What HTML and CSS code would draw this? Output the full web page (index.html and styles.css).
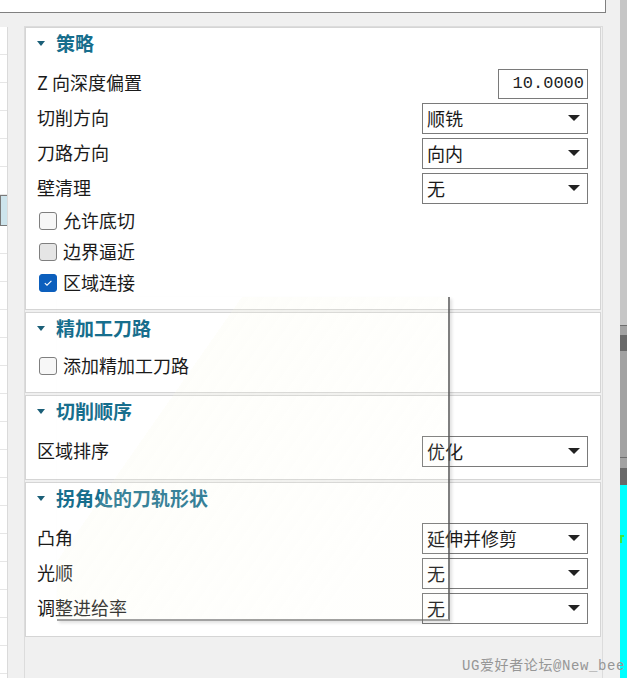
FILE: index.html
```html
<!DOCTYPE html>
<html lang="zh-CN">
<head>
  <meta charset="UTF-8">
  <title>策略</title>
  <link rel="stylesheet" href="styles.css">
</head>
<body>
<div class="screen">
  <div class="main">
    <div class="topbox"></div>
    <div class="work">
      <div class="list">
        <div class="li"></div><div class="li"></div><div class="li"></div><div class="li"></div><div class="li"></div><div class="li"></div>
        <div class="li sel"></div>
        <div class="li"></div><div class="li"></div><div class="li"></div><div class="li"></div><div class="li"></div>
        <div class="li"></div><div class="li"></div><div class="li"></div><div class="li"></div><div class="li"></div>
        <div class="li"></div><div class="li"></div><div class="li"></div><div class="li"></div><div class="li"></div>
        <div class="li"></div><div class="li"></div>
      </div>

      <div class="props">
        <!-- 策略 -->
        <section class="panel">
          <div class="head"><span class="tri"></span><span class="ht">策略</span></div>
          <div class="body">
            <div class="row"><span class="lb">Z 向深度偏置</span><span class="num">10.0000</span></div>
            <div class="row"><span class="lb">切削方向</span><span class="sel">顺铣<i class="arrow"></i></span></div>
            <div class="row"><span class="lb">刀路方向</span><span class="sel">向内<i class="arrow"></i></span></div>
            <div class="row"><span class="lb">壁清理</span><span class="sel">无<i class="arrow"></i></span></div>
            <div class="check"><span class="box"></span><span class="lb">允许底切</span></div>
            <div class="check"><span class="box hover"></span><span class="lb">边界逼近</span></div>
            <div class="check"><span class="box on"><svg width="10" height="8" viewBox="0 0 10 8"><path d="M1.8 4.2 L4 6.2 L8.4 1.8" fill="none" stroke="#fff" stroke-width="1.1"/></svg></span><span class="lb">区域连接</span></div>
          </div>
        </section>

        <!-- 精加工刀路 -->
        <section class="panel">
          <div class="head"><span class="tri"></span><span class="ht">精加工刀路</span></div>
          <div class="body">
            <div class="check"><span class="box"></span><span class="lb">添加精加工刀路</span></div>
          </div>
        </section>

        <!-- 切削顺序 -->
        <section class="panel">
          <div class="head"><span class="tri"></span><span class="ht">切削顺序</span></div>
          <div class="body">
            <div class="row"><span class="lb">区域排序</span><span class="sel">优化<i class="arrow"></i></span></div>
          </div>
        </section>

        <!-- 拐角处的刀轨形状 -->
        <section class="panel">
          <div class="head"><span class="tri"></span><span class="ht">拐角处的刀轨形状</span></div>
          <div class="body">
            <div class="row"><span class="lb">凸角</span><span class="sel">延伸并修剪<i class="arrow"></i></span></div>
            <div class="row"><span class="lb">光顺</span><span class="sel">无<i class="arrow"></i></span></div>
            <div class="row"><span class="lb">调整进给率</span><span class="sel">无<i class="arrow"></i></span></div>
          </div>
        </section>
      </div>
    </div>
  </div>

  <div class="strip">
    <div class="s-light"></div>
    <div class="s-line"></div>
    <div class="s-mid" style="height:9px"></div>
    <div class="s-dark" style="height:16px"></div>
    <div class="s-mid" style="height:106px"></div>
    <div class="s-line"></div>
    <div class="s-mid" style="height:10px"></div>
    <div class="s-dark" style="height:17px"></div>
    <div class="s-cyan"><span class="tick"></span></div>
  </div>

  <div class="ghost"></div>
  <div class="mark">UG爱好者论坛@New_bee</div>
</div>
</body>
</html>
```

FILE: styles.css
```css
body { margin:0; background:#f0f0f0; font-family:"Noto Sans CJK SC", "Noto Sans", sans-serif; color:#1a1a1a; overflow:hidden; }
.screen { display:flex; height:678px; position:relative; }
.main { width:620px; }
.topbox { width:605px; height:12px; background:#fff; border-right:1px solid #808080; border-bottom:1px solid #808080; }
.work { display:flex; margin-top:13px; height:652px; }

.list { width:7px; margin-top:1px; background:#fff; border-right:1px solid #dadada; overflow:hidden; }
.li { height:27px; border-bottom:1px solid #e6e6e6; }
.li.sel { background:#cde4ec; }

.props { margin-left:16px; width:579px; box-sizing:border-box; border:1px solid #dcdcdc; border-bottom:none; padding-right:1px; }
.panel { background:#fff; border:1px solid #d5d5d5; margin-bottom:2px; }
.head { height:33px; display:flex; align-items:center; gap:11px; padding-left:11px; font-size:19px; font-weight:bold; color:#176e8d; }
.head .ht { padding-bottom:4px; }
.tri { width:0; height:0; margin-bottom:2px; border-left:4px solid transparent; border-right:4px solid transparent; border-top:5px solid #1b5f78; }
.body { padding:5px 12px 10px 11px; }

.row { height:35px; display:flex; align-items:center; justify-content:space-between; font-size:18px; }
.check { height:31px; display:flex; align-items:center; gap:6px; padding-left:2px; font-size:18px; }
.lb { padding-bottom:3px; }
.check .lb { padding-bottom:4px; }
.box { width:16px; height:16px; margin-bottom:1px; border:1px solid #7f7f7f; border-radius:3px; background:#f7f7f7; display:flex; align-items:center; justify-content:center; }
.box.hover { background:#e5e5e5; }
.box.on { background:#0c5fbd; border-color:#0c5fbd; }

.sel { width:166px; height:31px; box-sizing:border-box; border:1px solid #7a7a7a; display:flex; align-items:center; justify-content:space-between; padding:0 7px 2px 4px; }
.arrow { width:0; height:0; margin-top:1px; border-left:6px solid transparent; border-right:6px solid transparent; border-top:6px solid #222; }
.num { width:90px; height:30px; box-sizing:border-box; border:1px solid #7a7a7a; text-align:right; padding-right:3px; font-family:"Liberation Mono", monospace; font-size:17px; line-height:27px; color:#222; }

.strip { width:7px; display:flex; flex-direction:column; }
.s-light { height:325px; background:#c6c6c6; }
.s-line { height:1px; background:#6e6e6e; }
.s-mid { background:#a2a2a2; }
.s-dark { background:#696969; }
.s-cyan { flex:1; background:#00ffff; position:relative; }
.tick { position:absolute; left:0; top:50px; width:4px; height:8px; border-top:2px solid #3ee83e; border-left:2px solid #3ee83e; box-sizing:border-box; }

.ghost { position:absolute; left:57px; top:297px; width:391px; height:322px; border-right:2px solid rgba(85,85,85,.75); border-bottom:2px solid rgba(85,85,85,.55); box-shadow:2px 2px 3px rgba(0,0,0,.12); background:linear-gradient(125deg, rgba(255,255,255,0) 30%, rgba(248,248,225,.16) 30%, rgba(248,248,225,.08) 80%); pointer-events:none; }
.mark { position:absolute; right:2px; bottom:4px; font-family:"Liberation Mono", "Noto Sans CJK SC", monospace; font-size:14px; letter-spacing:.6px; color:#969696; }
```
